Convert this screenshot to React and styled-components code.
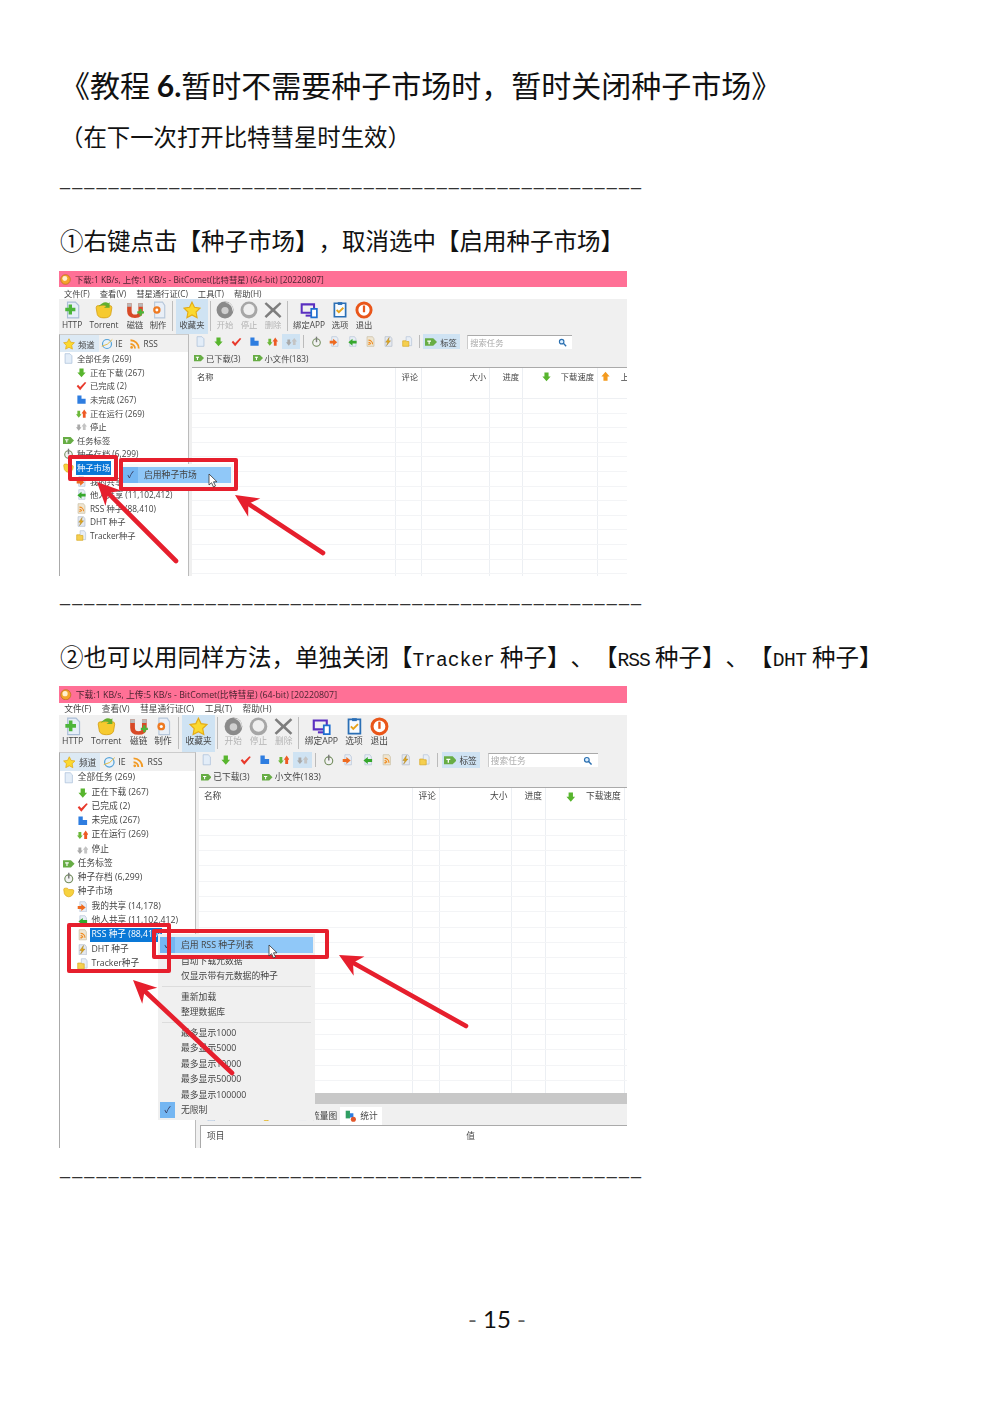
import styled, { createGlobalStyle } from "styled-components";

const UI_FONT = `"Open Sans", "Noto Sans CJK SC", sans-serif`;

const GlobalStyle = createGlobalStyle`
  html, body {
    margin: 0;
    background: #fff;
  }
`;

const ICONS = {
  page: <path d="M3 1h7l3 3v11H3z" fill="#e3edf8" stroke="#a8bdd8" />,
  down: <path d="M5 2h6v6h3l-6 7-6-7h3z" fill="#58b52e" />,
  up: <path d="M5 14h6V8h3L8 1 2 8h3z" fill="#f39a1e" />,
  check: <path d="M1 9l2-2 3 3 7-7 2 1-9 11z" fill="#e8392b" />,
  blue: <path d="M2 2h6v5h6v7H2z" fill="#2e7de0" />,
  run: (
    <>
      <path d="M2 4h4v5h2l-4 5-4-5h2z" fill="#6cb83a" />
      <path d="M10 14h4V8h2l-4-6-4 6h2z" fill="#ee5a24" />
    </>
  ),
  idle: (
    <>
      <path d="M2 5h4v4h2l-4 5-4-5h2z" fill="#a9a9a9" />
      <path d="M10 13h4V8h2l-4-5-4 5h2z" fill="#c4c4c4" />
    </>
  ),
  tag: (
    <>
      <path d="M0 3h11l5 5-5 5H0z" fill="#67ad45" />
      <path d="M3 6h5v1.500H6.300V11H4.700V7.500H3z" fill="#fff" />
    </>
  ),
  archive: (
    <>
      <circle cx="8" cy="9.500" r="5.500" fill="#f2f2f2" stroke="#6f8a5a" strokeWidth="1.500" />
      <path d="M7 1h2v8H7z" fill="#7a7a7a" />
    </>
  ),
  folder: <path d="M1 5q0-2 2-2h3l2 2h5q2 0 2 2l-1 4q-2 4-6 4t-6-4z" fill="#f7d23e" stroke="#dca91e" />,
  shareOut: (
    <>
      <path d="M4 1h7l2 3v11H4z" fill="#e8eef6" stroke="#b6c5d8" />
      <path d="M1 7h5V4l6 5-6 5v-3H1z" fill="#ee6a1f" />
    </>
  ),
  shareIn: (
    <>
      <path d="M4 1h7l2 3v11H4z" fill="#e8eef6" stroke="#b6c5d8" />
      <path d="M14 7H8V4L2 9l6 5v-3h6z" fill="#36a82c" />
    </>
  ),
  rss: (
    <>
      <path d="M3 1h8l2 3v11H3z" fill="#efe6d2" stroke="#c9bda2" />
      <path d="M5 6a6 6 0 0 1 6 6M5 9a3 3 0 0 1 3 3" fill="none" stroke="#f08a1d" strokeWidth="1.600" />
      <circle cx="5.800" cy="12" r="1.200" fill="#f08a1d" />
    </>
  ),
  dht: (
    <>
      <path d="M3 1h8l2 3v11H3z" fill="#e5e9ef" stroke="#b2bccb" />
      <path d="M9 2L4 9h3l-2 5 6-7H8z" fill="#e6a91a" stroke="#8c6a12" strokeWidth="0.500" />
    </>
  ),
  tracker: (
    <>
      <path d="M6 1h6l2 3v10H6z" fill="#e8eef6" stroke="#b6c5d8" />
      <path d="M1 7h5l1 1h3v7H1z" fill="#f5cf4f" stroke="#d8a924" />
    </>
  ),
  star: <path d="M8 1l2.200 4.600 5 .7-3.600 3.500.9 5L8 12.400 3.500 14.800l.9-5L.8 6.300l5-.7z" fill="#fbd92f" stroke="#e4ab17" />,
  httpAdd: (
    <>
      <path d="M4 1h7l3 3v11H4z" fill="#e6eef8" stroke="#a9bdd6" />
      <path d="M5 3h3v3h3v3H8v3H5V9H2V6h3z" fill="#4cb53a" />
    </>
  ),
  torrent: (
    <>
      <path d="M1 6q0-2 2-2h10q2 0 2 2l-1 6q-1 3-6 3t-6-3z" fill="#f6ca2f" stroke="#d49e14" strokeWidth="0.700" />
      <path d="M3 5q5-6 9-3l1-1v5H8l2-1.500Q7 3 3 5z" fill="#63ae2e" />
    </>
  ),
  magnet: (
    <>
      <path d="M1 2h4v7q0 3 3 3t3-3V2h4v7q0 6-7 6T1 9z" fill="#d84a27" />
      <path d="M1 2h4v3H1zM11 2h4v3h-4z" fill="#b9b9b9" />
      <path d="M10 9h2V7h2v2h2v2h-2v2h-2v-2h-2z" fill="#4cb53a" />
    </>
  ),
  make: (
    <>
      <path d="M5 1h7l2 3v11H5z" fill="#e9eff7" stroke="#b7c7da" />
      <circle cx="7" cy="8" r="3.300" fill="#ee7a22" />
      <circle cx="7" cy="8" r="1.300" fill="#fff" />
    </>
  ),
  start: (
    <>
      <circle cx="8" cy="8" r="7.500" fill="#8a8a8a" />
      <path d="M8 1.500a6.500 6.500 0 0 1 6 8.500A5.500 5.500 0 0 0 8 1.500z" fill="#e6e6e6" />
      <circle cx="8" cy="8.500" r="3.200" fill="#cfcfcf" />
    </>
  ),
  stop: (
    <>
      <circle cx="8" cy="8" r="7.500" fill="#a6a6a6" />
      <circle cx="8" cy="7.500" r="5" fill="#efefef" />
    </>
  ),
  remove: <path d="M2 1l6 5.500L14 1l1.500 1.500L9.800 8l5.700 5.500L14 15 8 9.500 2 15 .5 13.500 6.200 8 .5 2.500z" fill="#7d7d7d" />,
  app: (
    <>
      <path d="M1.500 3h11v7.500h-11z" fill="none" stroke="#5a2fc0" strokeWidth="1.800" />
      <path d="M5 13h5" stroke="#5a2fc0" strokeWidth="1.800" />
      <path d="M10 7h5v7.500h-5z" fill="#fff" stroke="#1f6fd0" strokeWidth="1.500" />
    </>
  ),
  options: (
    <>
      <path d="M3 2h10v12H3z" fill="#f7fbff" stroke="#2b6fb5" strokeWidth="1.500" />
      <path d="M6 1h4v2.500H6z" fill="#2b6fb5" />
      <path d="M5 8l2 2 4-4" fill="none" stroke="#e6a21a" strokeWidth="1.600" />
    </>
  ),
  exit: (
    <>
      <circle cx="8" cy="8" r="6.300" fill="#fff" stroke="#e9561a" strokeWidth="2.600" />
      <path d="M7 4h2v6H7z" fill="#e9561a" />
    </>
  ),
  search: (
    <>
      <circle cx="6.500" cy="6.500" r="4" fill="#dbeeff" stroke="#2a6fb0" strokeWidth="2" />
      <path d="M9.500 9.500l5 5" stroke="#2a6fb0" strokeWidth="2.400" />
    </>
  ),
  comet: (
    <>
      <circle cx="8" cy="8" r="7" fill="#f4a42c" stroke="#b96c1c" />
      <circle cx="7" cy="6.500" r="3.600" fill="#fff0d0" />
    </>
  ),
  stats: (
    <>
      <path d="M2 2h5v9H2z" fill="#2f9e62" />
      <path d="M7 5h4v5H7z" fill="#2e7de0" />
      <circle cx="11" cy="12" r="3" fill="#e2572b" />
    </>
  ),
  chart: <path d="M2 4h12v9H2z" fill="#dfe5f7" stroke="#5566c0" />,
  rssPlain: (
    <>
      <path d="M2 3a11 11 0 0 1 11 11M2 8a6 6 0 0 1 6 6" fill="none" stroke="#f29a23" strokeWidth="2.400" />
      <circle cx="3.500" cy="12.500" r="1.800" fill="#f29a23" />
    </>
  ),
  ie: (
    <>
      <circle cx="8" cy="8" r="6" fill="#e7f2fb" stroke="#57a3d8" strokeWidth="1.600" />
      <path d="M1 11q8-1 14-9" fill="none" stroke="#e5b83a" strokeWidth="1.200" />
    </>
  ),
};

function Icon({ name, size = 10 }) {
  return (
    <IconSvg width={size} height={size} viewBox="0 0 16 16">
      {ICONS[name]}
    </IconSvg>
  );
}

const TOOLBAR = [
  { label: "HTTP", icon: "httpAdd", w: 26 },
  { label: "Torrent", icon: "torrent", w: 38 },
  { label: "磁链", icon: "magnet", w: 24 },
  { label: "制作", icon: "make", w: 22 },
  { sep: 7 },
  { label: "收藏夹", icon: "star", w: 32, active: true },
  { sep: 4 },
  { label: "开始", icon: "start", w: 26, muted: true },
  { label: "停止", icon: "stop", w: 22, muted: true },
  { label: "删除", icon: "remove", w: 26, muted: true },
  { sep: 2 },
  { label: "绑定APP", icon: "app", w: 42 },
  { label: "选项", icon: "options", w: 20 },
  { label: "退出", icon: "exit", w: 28 },
];

const TREE = [
  { text: "全部任务 (269)", icon: "page", level: 0 },
  { text: "正在下载 (267)", icon: "down", level: 1 },
  { text: "已完成 (2)", icon: "check", level: 1 },
  { text: "未完成 (267)", icon: "blue", level: 1 },
  { text: "正在运行 (269)", icon: "run", level: 1 },
  { text: "停止", icon: "idle", level: 1 },
  { text: "任务标签", icon: "tag", level: 0 },
  { text: "种子存档 (6,299)", icon: "archive", level: 0 },
  { text: "种子市场", icon: "folder", level: 0 },
  { text: "我的共享 (14,178)", icon: "shareOut", level: 1 },
  { text: "他人共享 (11,102,412)", icon: "shareIn", level: 1 },
  { text: "RSS 种子 (88,410)", icon: "rss", level: 1 },
  { text: "DHT 种子", icon: "dht", level: 1 },
  { text: "Tracker种子", icon: "tracker", level: 1 },
];

const TASK_ICONS = ["page", "down", "check", "blue", "run", "idle"];
const MARKET_ICONS = ["archive", "shareOut", "shareIn", "rss", "dht", "tracker"];
const GRID_ROWS = Array.from({ length: 26 }, (_, i) => i);

function Arrow({ from, to }) {
  const dx = to[0] - from[0];
  const dy = to[1] - from[1];
  const len = Math.hypot(dx, dy);
  const ux = dx / len;
  const uy = dy / len;
  const at = (along, side) => `${to[0] - ux * along - uy * side},${to[1] - uy * along + ux * side}`;
  return (
    <>
      <line x1={from[0]} y1={from[1]} x2={to[0] - ux * 12} y2={to[1] - uy * 12} stroke="#e61f2d" strokeWidth="4.600" strokeLinecap="round" />
      <polygon points={`${at(0, 0)} ${at(23, 11)} ${at(16, 0)} ${at(23, -11)}`} fill="#e61f2d" />
    </>
  );
}

function CursorArrow({ x, y }) {
  return (
    <path
      transform={`translate(${x} ${y})`}
      d="M0 0v11l2.500-2.300L4.500 13l2-1-2-4.200H8z"
      fill="#fff"
      stroke="#333"
      strokeWidth="0.800"
    />
  );
}

function CometWindow({ title, selected, panel, zoom, height }) {
  return (
    <AppWindow $zoom={zoom} $height={height}>
      <TitleBar>
        <Icon name="comet" size={11} />
        {title}
      </TitleBar>
      <MenuBar>
        <span>文件(F)</span>
        <span>查看(V)</span>
        <span>彗星通行证(C)</span>
        <span>工具(T)</span>
        <span>帮助(H)</span>
      </MenuBar>
      <Toolbar>
        {TOOLBAR.map((item, i) =>
          item.sep ? (
            <ToolSep key={i} $w={item.sep} />
          ) : (
            <ToolButton key={item.label} $w={item.w} $active={item.active} $muted={item.muted}>
              <Icon name={item.icon} size={18} />
              <span>{item.label}</span>
            </ToolButton>
          )
        )}
      </Toolbar>
      <Body>
        <Sidebar>
          <SideTabs>
            <SideTab $active>
              <Icon name="star" size={12} />
              频道
            </SideTab>
            <SideTab>
              <Icon name="ie" size={12} />
              IE
            </SideTab>
            <SideTab>
              <Icon name="rssPlain" size={12} />
              RSS
            </SideTab>
          </SideTabs>
          {TREE.map((row) => (
            <TreeRow key={row.text} $level={row.level}>
              <Icon name={row.icon} size={11} />
              <TreeLabel $selected={row.text.startsWith(selected)}>{row.text}</TreeLabel>
            </TreeRow>
          ))}
        </Sidebar>
        <Splitter />
        <Main>
          <SubBar>
            {TASK_ICONS.map((name) => (
              <SubSlot key={name} $active={name === "idle"}>
                <Icon name={name} size={11} />
              </SubSlot>
            ))}
            <SubSep />
            {MARKET_ICONS.map((name) => (
              <SubSlot key={name}>
                <Icon name={name} size={11} />
              </SubSlot>
            ))}
            <SubSep />
            <TagButton>
              <Icon name="tag" size={12} />
              标签
            </TagButton>
            <SearchBox>
              搜索任务
              <Icon name="search" size={9} />
            </SearchBox>
          </SubBar>
          <TagRow>
            <TagItem>
              <Icon name="tag" size={10} />
              已下载(3)
            </TagItem>
            <TagItem>
              <Icon name="tag" size={10} />
              小文件(183)
            </TagItem>
          </TagRow>
          <TaskTable>
            <HeadRow>
              <HeadCell>名称</HeadCell>
              <HeadCell $right>评论</HeadCell>
              <HeadCell $right>大小</HeadCell>
              <HeadCell $right>进度</HeadCell>
              <HeadCell $right $gap={9}>
                <Icon name="down" size={11} />
                下载速度
              </HeadCell>
              <HeadCell $right $gap={10}>
                <Icon name="up" size={11} />
                上
              </HeadCell>
            </HeadRow>
            {GRID_ROWS.map((i) => (
              <GridRow key={i}>
                <i />
                <i />
                <i />
                <i />
                <i />
                <i />
              </GridRow>
            ))}
          </TaskTable>
          {panel && (
            <>
              <ScrollTrack />
              <PanelTabs>
                <PanelTab $w={52}>
                  <Icon name="page" size={10} />
                  任务属性
                </PanelTab>
                <PanelTab $w={35}>
                  <Icon name="folder" size={10} />
                  文件
                </PanelTab>
                <PanelTab $w={46}>
                  <Icon name="chart" size={10} />
                  流量图
                </PanelTab>
                <PanelTab $w={40} $active>
                  <Icon name="stats" size={13} />
                  统计
                </PanelTab>
              </PanelTabs>
              <PanelHead>
                <span>项目</span>
                <span>值</span>
              </PanelHead>
            </>
          )}
        </Main>
      </Body>
    </AppWindow>
  );
}

const MARKET_MENU = [
  { text: "自动下载元数据" },
  { text: "仅显示带有元数据的种子" },
  { sep: true },
  { text: "重新加载" },
  { text: "整理数据库" },
  { sep: true },
  { text: "最多显示1000" },
  { text: "最多显示5000" },
  { text: "最多显示10000" },
  { text: "最多显示50000" },
  { text: "最多显示100000" },
  { text: "无限制", checked: true },
];

export default function App() {
  return (
    <Page>
      <GlobalStyle />
      <Title>
        《教程 <TitleNum>6.</TitleNum>暂时不需要种子市场时，暂时关闭种子市场》
      </Title>
      <Subtitle>（在下一次打开比特彗星时生效）</Subtitle>
      <Rule $top={15}>{"_".repeat(48)}</Rule>
      <Heading $top={33}>①右键点击【种子市场】，取消选中【启用种子市场】</Heading>
      <Shot $top={15} $height={305}>
        <CometWindow
          title="下载:1 KB/s, 上传:1 KB/s - BitComet(比特彗星) (64-bit) [20220807]"
          selected="种子市场"
          zoom={1}
          height={305}
        />
        <PopupMenu $x={62} $y={193} $w={112} $h={24} $light>
          <MenuItem $hot>
            <MenuCheck $hot>✓</MenuCheck>
            启用种子市场
          </MenuItem>
        </PopupMenu>
        <RedBox $x={9} $y={184} $w={50} $h={26} />
        <RedBox $x={60} $y={187} $w={119} $h={33} />
        <Overlay width="568" height="305">
          <CursorArrow x={150} y={203} />
          <Arrow from={[117, 290]} to={[38, 211]} />
          <Arrow from={[264, 282]} to={[176, 224]} />
        </Overlay>
      </Shot>
      <Rule $top={7}>{"_".repeat(48)}</Rule>
      <Heading $top={33}>
        ②也可以用同样方法，单独关闭【<Mono>Tracker</Mono> 种子】、【<Mono $ls={-1}>RSS</Mono> 种子】、【<Mono $ls={-0.4}>DHT</Mono> 种子】
      </Heading>
      <Shot $top={14} $height={462}>
        <CometWindow
          title="下载:1 KB/s, 上传:5 KB/s - BitComet(比特彗星) (64-bit) [20220807]"
          selected="RSS"
          panel
          zoom={1.05}
          height={440}
        />
        <PopupMenu $x={99} $y={248} $w={157} $h={186}>
          <MenuItem $hot>
            <MenuCheck $hot>✓</MenuCheck>
            启用 RSS 种子列表
          </MenuItem>
          {MARKET_MENU.map((item, i) =>
            item.sep ? (
              <MenuSep key={i} />
            ) : (
              <MenuItem key={item.text}>
                <MenuCheck $hot={item.checked}>{item.checked ? "✓" : ""}</MenuCheck>
                {item.text}
              </MenuItem>
            )
          )}
        </PopupMenu>
        <RedBox $x={8} $y={237} $w={104} $h={50} />
        <RedBox $x={93} $y={243} $w={177} $h={30} />
        <Overlay width="568" height="462">
          <CursorArrow x={210} y={259} />
          <Arrow from={[173, 387]} to={[74, 294]} />
          <Arrow from={[407, 340]} to={[280, 269]} />
        </Overlay>
      </Shot>
      <Rule $top={8}>{"_".repeat(48)}</Rule>
      <PageNumber>
        - <b>15</b> -
      </PageNumber>
    </Page>
  );
}

const Page = styled.div`
  box-sizing: border-box;
  width: 992px;
  height: 1403px;
  padding: 64px 0 0 60px;
  color: #111;
  font-family: "Noto Sans CJK SC", sans-serif;
  text-spacing-trim: space-all;
  overflow: hidden;
`;

const Title = styled.div`
  font-size: 30px;
  line-height: 40px;
  white-space: nowrap;
`;

const TitleNum = styled.span`
  font-family: Lato, "Noto Sans CJK SC", sans-serif;
  font-weight: 700;
`;

const Subtitle = styled.div`
  margin-top: 15px;
  font-size: 23.4px;
  line-height: 32px;
`;

const Rule = styled.div`
  margin-top: ${(p) => p.$top}px;
  height: 24px;
  font-family: "Liberation Serif", serif;
  font-size: 20px;
  line-height: 24px;
  letter-spacing: 2.15px;
  white-space: nowrap;
  color: #333;
`;

const Heading = styled.div`
  margin-top: ${(p) => p.$top}px;
  height: 32px;
  font-size: 23.5px;
  line-height: 32px;
  white-space: nowrap;
`;

const Mono = styled.span`
  font-family: "Liberation Mono", monospace;
  font-size: 19.6px;
  line-height: 1;
  letter-spacing: ${(p) => p.$ls || 0}px;
`;

const Shot = styled.div`
  position: relative;
  width: 568px;
  height: ${(p) => p.$height}px;
  margin-top: ${(p) => p.$top}px;
  margin-left: -1px;
  overflow: hidden;
  filter: blur(0.3px);
`;

const AppWindow = styled.div`
  zoom: ${(p) => p.$zoom};
  display: flex;
  flex-direction: column;
  width: ${(p) => 568 / p.$zoom + 40}px;
  height: ${(p) => p.$height}px;
  font-family: ${UI_FONT};
  font-size: 8.3px;
  color: #444;
  background: #fff;
`;

const IconSvg = styled.svg`
  flex: none;
  display: block;
`;

const TitleBar = styled.div`
  flex: none;
  display: flex;
  align-items: center;
  gap: 4px;
  box-sizing: border-box;
  width: 568px;
  height: 16px;
  margin-bottom: 1px;
  padding-left: 1px;
  background: #ff7096;
  color: #4a2430;
  font-size: 8.4px;
  white-space: nowrap;
`;

const MenuBar = styled.div`
  flex: none;
  display: flex;
  gap: 10px;
  height: 11px;
  padding-left: 5px;
  line-height: 11px;
`;

const Toolbar = styled.div`
  flex: none;
  display: flex;
  align-items: stretch;
  height: 35px;
  background: #f0f0f0;
`;

const ToolButton = styled.div`
  box-sizing: border-box;
  flex: none;
  display: flex;
  flex-direction: column;
  align-items: center;
  width: ${(p) => p.$w}px;
  padding-top: 2px;
  background: ${(p) => (p.$active ? "#cfe3f3" : "transparent")};
  color: ${(p) => (p.$muted ? "#b4b4b4" : "#444")};
  white-space: nowrap;
  line-height: 11px;
`;

const ToolSep = styled.div`
  flex: none;
  width: ${(p) => p.$w}px;

  &::after {
    content: "";
    display: block;
    width: 1px;
    height: 30px;
    margin: 2px auto 0;
    background: #bdbdbd;
  }
`;

const Body = styled.div`
  flex: 1;
  min-height: 0;
  display: flex;
  background: #f0f0f0;
`;

const Sidebar = styled.div`
  flex: none;
  box-sizing: border-box;
  width: 130px;
  border-left: 1px solid #aaa;
  border-top: 1px solid #ccc;
  border-right: 1px solid #bbb;
  background: #fff;
`;

const SideTabs = styled.div`
  display: flex;
  height: 17px;
  background: #f0f0f0;
`;

const SideTab = styled.div`
  display: flex;
  align-items: center;
  gap: 3px;
  padding: 0 4px 0 ${(p) => (p.$active ? 3 : 2)}px;
  min-width: ${(p) => (p.$active ? 30 : 0)}px;
  background: ${(p) => (p.$active ? "#dce9f4" : "transparent")};
`;

const TreeRow = styled.div`
  display: flex;
  align-items: center;
  gap: 2px;
  height: 13.6px;
  padding-left: ${(p) => (p.$level ? 16 : 3)}px;
  white-space: nowrap;
`;

const TreeLabel = styled.span`
  padding: 1.5px 1px;
  line-height: 11px;
  background: ${(p) => (p.$selected ? "#0a78d7" : "transparent")};
  color: ${(p) => (p.$selected ? "#fff" : "#444")};
`;

const Splitter = styled.div`
  flex: none;
  width: 3px;
  background: #f0f0f0;
`;

const Main = styled.div`
  flex: 1;
  min-width: 0;
  display: flex;
  flex-direction: column;
`;

const SubBar = styled.div`
  flex: none;
  display: flex;
  align-items: center;
  height: 15px;
  margin-left: -1px;
`;

const SubSlot = styled.div`
  flex: none;
  display: flex;
  align-items: center;
  justify-content: center;
  width: 18.2px;
  height: 15px;
  background: ${(p) => (p.$active ? "#cfe3f3" : "transparent")};
`;

const SubSep = styled.div`
  flex: none;
  width: 1px;
  height: 13px;
  margin: 0 3px;
  background: #bbb;
`;

const TagButton = styled.div`
  flex: none;
  display: flex;
  align-items: center;
  gap: 3px;
  box-sizing: border-box;
  width: 37px;
  height: 15px;
  padding-left: 2px;
  background: #cfe3f3;
`;

const SearchBox = styled.div`
  flex: none;
  display: flex;
  align-items: center;
  justify-content: space-between;
  box-sizing: border-box;
  width: 105px;
  height: 14px;
  margin-left: 7px;
  padding: 0 5px 0 2px;
  border-top: 1px solid #aaa;
  border-left: 1px solid #ccc;
  background: #fff;
  color: #aaa;
`;

const TagRow = styled.div`
  flex: none;
  display: flex;
  gap: 12px;
  box-sizing: border-box;
  height: 18px;
  align-items: center;
  padding: 0 0 1px 2px;
`;

const TagItem = styled.div`
  display: flex;
  align-items: center;
  gap: 2px;
`;

const COLUMNS = "204px 26px 68px 33px 75px 35px";

const TaskTable = styled.div`
  flex: 1;
  min-height: 0;
  overflow: hidden;
  background: #fff;
  border-top: 1px solid #aaa;
`;

const HeadRow = styled.div`
  display: grid;
  grid-template-columns: ${COLUMNS};
  height: 30px;
  border-bottom: 1px solid #eef0f3;
`;

const HeadCell = styled.div`
  display: flex;
  align-items: flex-start;
  justify-content: ${(p) => (p.$right ? "flex-end" : "flex-start")};
  gap: ${(p) => p.$gap || 0}px;
  box-sizing: border-box;
  padding: 3px 3px 0 5px;
  border-right: 1px solid #eceff3;
  line-height: 11px;
  white-space: nowrap;
`;

const GridRow = styled.div`
  display: grid;
  grid-template-columns: ${COLUMNS};
  height: 14.6px;
  box-sizing: border-box;
  border-bottom: 1px solid #f3f4f6;

  i {
    border-right: 1px solid #eceff3;
  }
`;

const ScrollTrack = styled.div`
  flex: none;
  height: 10px;
  background: #c8c8c8;
`;

const PanelTabs = styled.div`
  flex: none;
  display: flex;
  height: 17px;
  margin-top: 3px;
  padding-left: 2px;
  background: #f0f0f0;
`;

const PanelTab = styled.div`
  flex: none;
  display: flex;
  align-items: center;
  gap: 3px;
  box-sizing: border-box;
  width: ${(p) => p.$w}px;
  padding: 0 0 0 ${(p) => (p.$active ? 3 : 5)}px;
  background: ${(p) => (p.$active ? "#fff" : "transparent")};
`;

const PanelHead = styled.div`
  flex: none;
  display: grid;
  grid-template-columns: 247px 1fr;
  box-sizing: border-box;
  height: 22px;
  margin-left: 1px;
  padding: 3px 0 0 6px;
  border-top: 1px solid #aaa;
  border-left: 1px solid #aaa;
  background: #fff;
`;

const PopupMenu = styled.div`
  position: absolute;
  left: ${(p) => p.$x}px;
  top: ${(p) => p.$y}px;
  box-sizing: border-box;
  width: ${(p) => p.$w}px;
  height: ${(p) => p.$h}px;
  padding: 3px 2px;
  background: ${(p) => (p.$light ? "#f8f8f8" : "#f0f0f0")};
  font-family: ${UI_FONT};
  font-size: 8.8px;
  color: #444;
`;

const MenuItem = styled.div`
  display: flex;
  align-items: center;
  gap: 6px;
  height: 15.5px;
  background: ${(p) => (p.$hot ? "#90c8f8" : "transparent")};
  white-space: nowrap;
`;

const MenuCheck = styled.span`
  flex: none;
  width: 15px;
  height: 100%;
  display: flex;
  align-items: center;
  justify-content: center;
  background: ${(p) => (p.$hot ? "#74b6f2" : "transparent")};
  color: #335;
  font-size: 9px;
`;

const MenuSep = styled.div`
  height: 1px;
  margin: 2px 2px;
  background: #dcdcdc;
`;

const RedBox = styled.div`
  position: absolute;
  left: ${(p) => p.$x}px;
  top: ${(p) => p.$y}px;
  box-sizing: border-box;
  width: ${(p) => p.$w}px;
  height: ${(p) => p.$h}px;
  border: 4px solid #e61f2d;
  border-radius: 2px;
`;

const Overlay = styled.svg`
  position: absolute;
  left: 0;
  top: 0;
  pointer-events: none;
`;

const PageNumber = styled.div`
  margin: 124px 0 0 408px;
  font-family: Lato, sans-serif;
  font-size: 24px;
  line-height: 30px;
  color: #666;
  white-space: pre;

  b {
    font-weight: 400;
    color: #111;
  }
`;
